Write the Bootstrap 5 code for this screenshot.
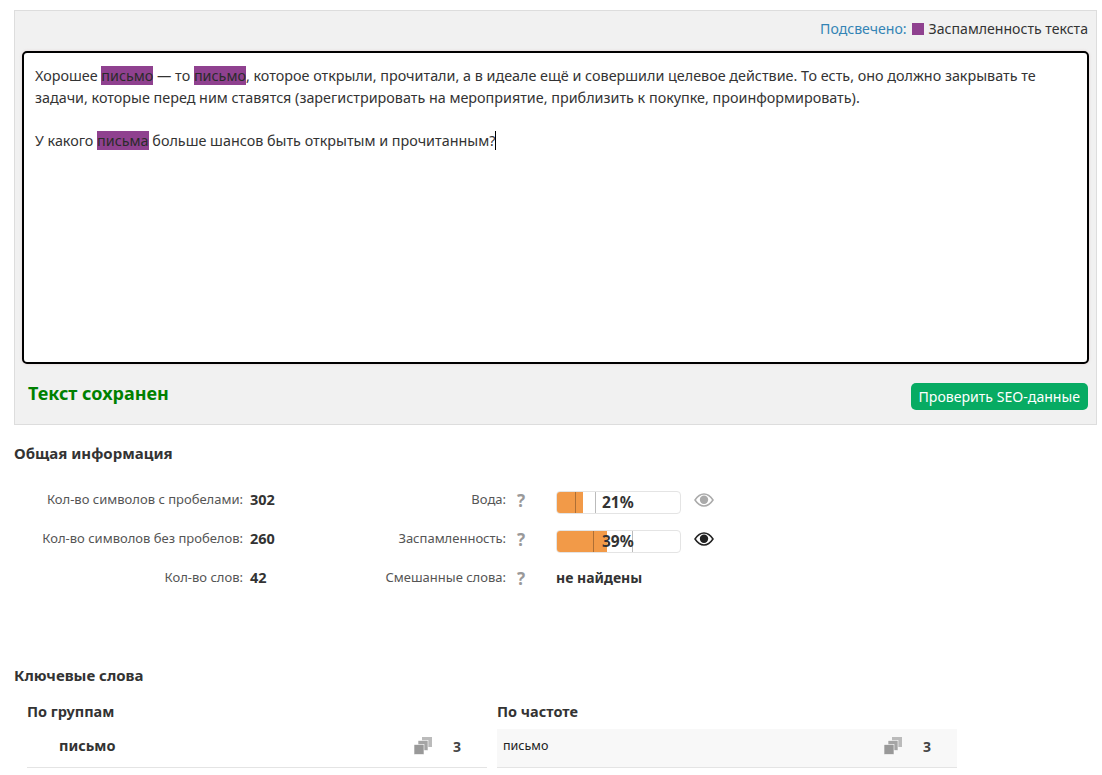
<!DOCTYPE html>
<html lang="ru"><head><meta charset="utf-8"><title>SEO</title>
<link href="https://cdn.jsdelivr.net/npm/bootstrap@5.3.0/dist/css/bootstrap.min.css" rel="stylesheet">
<style>
html,body{height:775px;overflow:hidden}
body{font-family:"Noto Sans","Open Sans",sans-serif;font-size:14px;color:#333;background:#fff;padding:10px 5px 0 14px}
.pane{background:#f1f1f1;border:1px solid #ddd;height:415px;padding:0 7px}
.legend-row{height:40px;padding:0 1px 4px 0;font-size:14.1px}
.legend-lbl{color:#3484b5}
.swatch{width:12px;height:12px;background:#8f418f;margin:0 5px}
.editor{height:313px;background:#fff;border:2px solid #000;border-radius:5px;box-shadow:0 0 3px rgba(200,150,150,.35);padding:12px 11px;line-height:21.5px;font-size:14.35px}
.editor p{margin:0 0 21.5px}
.hl{background:#8f418f;color:#2b2b2b}
.caret{border-right:1px solid #000}
.saved-row{height:60px;padding:0 1px 0 6px}
.saved{color:green;font-weight:700;font-size:18px;margin-top:-1px}
.go-btn{background:#07ab63;color:#fff;font-size:14.1px;padding:0 8px;height:27px;line-height:27px;border-radius:5px;border:0;margin-top:5px}
.sect{font-weight:700;font-size:15px;margin:0;line-height:20px}
.sect-first{margin-top:18px}
.stats{margin-top:17px;height:117px}
.stat-line{height:39px}
.st-a{width:229px;text-align:right;color:#555;margin-right:7px;font-size:13px}
.st-b{width:130px;font-weight:700;font-size:14.5px}
.st-c{width:126px;text-align:right;color:#555;font-size:13px}
.st-q{width:30px;margin-right:20px;text-align:center;font-weight:700;font-size:17px;color:#999;margin-top:2px}
.meter{width:125px;height:23px;border:1px solid #e4e4e4;border-radius:4px;background:#fff;padding-left:45px;line-height:21px;font-weight:700;font-size:15.5px;overflow:hidden;margin-top:6px}
.fill{top:0;left:0;bottom:0;background:#f29a48}
.tick{top:0;bottom:0;width:1px;background:rgba(90,60,30,.45)}
.tick-g{background:#bbb}
.eye{margin-left:13px;width:20px;height:14px}
.kw-title{margin-top:68px}
.kw-wrap{margin:16px 0 0 13px;gap:10px}
.kw-col{width:460px}
.kw-head{font-weight:700;font-size:14.5px;line-height:20px;height:28px}
.kw-item{height:39px;border-bottom:1px solid #e4e4e4;padding-bottom:4px}
.kw-alt{background:#f8f8f8}
.kw-name{flex:1}
.kw-b{font-weight:700;font-size:14.5px;padding-left:32px}
.kw-n{font-size:12.5px;color:#222;padding-left:6px}
.kw-ico{width:18px;height:18px}
.kw-cnt{width:55px;padding-left:21px;font-weight:700;color:#444;font-size:14px}
</style></head>
<body>
<div class="pane">
  <div class="legend-row d-flex justify-content-end align-items-center"><span class="legend-lbl">Подсвечено:</span><span class="swatch"></span><span>Заспамленность текста</span></div>
  <div class="editor"><p>Хорошее <span class="hl">письмо</span> — то <span class="hl">письмо</span>, которое открыли, прочитали, а в идеале ещё и совершили целевое действие. То есть, оно должно закрывать те задачи, которые перед ним ставятся (зарегистрировать на мероприятие, приблизить к покупке, проинформировать).</p><p>У какого <span class="hl">письма</span> больше шансов быть открытым и прочитанным?<span class="caret"></span></p></div>
  <div class="saved-row d-flex justify-content-between align-items-center"><span class="saved">Текст сохранен</span><button class="go-btn" type="button">Проверить SEO-данные</button></div>
</div>
<h2 class="sect sect-first">Общая информация</h2>
<div class="stats">
  <div class="stat-line d-flex align-items-center"><span class="st-a">Кол-во символов с пробелами:</span><span class="st-b">302</span><span class="st-c">Вода:</span><span class="st-q">?</span>
    <div class="meter position-relative"><span class="fill position-absolute" style="width:26px"></span><span class="tick position-absolute" style="left:18px"></span><span class="tick tick-g position-absolute" style="left:38px"></span><span class="position-relative">21%</span></div>
    <svg class="eye" viewBox="0 0 20 14"><path d="M1 7C4 2.500 7 1 10 1s6 1.500 9 6c-3 4.500-6 6-9 6S4 11.500 1 7z" fill="#fff" stroke="#aaa" stroke-width="1.500"/><circle cx="10" cy="6.800" r="4.200" fill="#aaa"/></svg></div>
  <div class="stat-line d-flex align-items-center"><span class="st-a">Кол-во символов без пробелов:</span><span class="st-b">260</span><span class="st-c">Заспамленность:</span><span class="st-q">?</span>
    <div class="meter position-relative"><span class="fill position-absolute" style="width:50px"></span><span class="tick position-absolute" style="left:36px"></span><span class="tick tick-g position-absolute" style="left:75px"></span><span class="position-relative">39%</span></div>
    <svg class="eye" viewBox="0 0 20 14"><path d="M1 7C4 2.500 7 1 10 1s6 1.500 9 6c-3 4.500-6 6-9 6S4 11.500 1 7z" fill="#fff" stroke="#222" stroke-width="1.500"/><circle cx="10" cy="6.800" r="4.200" fill="#222"/></svg></div>
  <div class="stat-line d-flex align-items-center"><span class="st-a">Кол-во слов:</span><span class="st-b">42</span><span class="st-c">Смешанные слова:</span><span class="st-q">?</span><b>не найдены</b></div>
</div>
<h2 class="sect kw-title">Ключевые слова</h2>
<div class="kw-wrap d-flex">
  <div class="kw-col"><div class="kw-head">По группам</div>
    <div class="kw-item d-flex align-items-center"><span class="kw-name kw-b">письмо</span><svg class="kw-ico" viewBox="0 0 18 18" fill="#999"><rect x="8" y="0" width="10" height="10" fill="#bbb"/><rect x="4" y="3.500" width="10" height="10" fill="#a5a5a5" stroke="#fff" stroke-width=".6"/><rect x="0" y="7.500" width="10" height="10" stroke="#fff" stroke-width=".6"/></svg><span class="kw-cnt">3</span></div></div>
  <div class="kw-col"><div class="kw-head">По частоте</div>
    <div class="kw-item kw-alt d-flex align-items-center"><span class="kw-name kw-n">письмо</span><svg class="kw-ico" viewBox="0 0 18 18" fill="#999"><rect x="8" y="0" width="10" height="10" fill="#bbb"/><rect x="4" y="3.500" width="10" height="10" fill="#a5a5a5" stroke="#fff" stroke-width=".6"/><rect x="0" y="7.500" width="10" height="10" stroke="#fff" stroke-width=".6"/></svg><span class="kw-cnt">3</span></div></div>
</div>
<script src="https://cdn.jsdelivr.net/npm/bootstrap@5.3.0/dist/js/bootstrap.bundle.min.js"></script>
</body></html>
